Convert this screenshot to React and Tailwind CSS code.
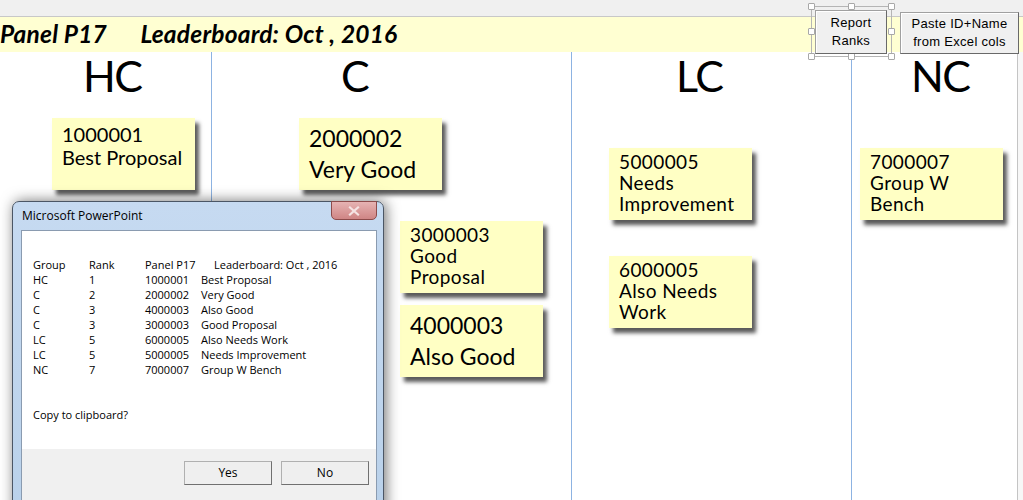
import React from 'react';

const notes = [
  { x: 52, y: 118, size: 'mid', lines: ['1000001', 'Best Proposal'] },
  { x: 299, y: 118, size: 'big', lines: ['2000002', 'Very Good'] },
  { x: 400, y: 221, size: 'small', lines: ['3000003', 'Good', 'Proposal'] },
  { x: 400, y: 305, size: 'big', lines: ['4000003', 'Also Good'] },
  { x: 609, y: 148, size: 'small', lines: ['5000005', 'Needs', 'Improvement'] },
  { x: 609, y: 256, size: 'small', lines: ['6000005', 'Also Needs', 'Work'] },
  { x: 860, y: 148, size: 'small', lines: ['7000007', 'Group W', 'Bench'] },
];

const noteText = {
  big: 'pt-[5px] text-[23px] leading-[31px]',
  mid: 'pt-[5px] text-[20px] leading-[23px]',
  small: 'pt-[3px] text-[19px] leading-[21px] tracking-[0.4px]',
};

const rows = [
  ['HC', '1', '1000001', 'Best Proposal'],
  ['C', '2', '2000002', 'Very Good'],
  ['C', '3', '4000003', 'Also Good'],
  ['C', '3', '3000003', 'Good Proposal'],
  ['LC', '5', '6000005', 'Also Needs Work'],
  ['LC', '5', '5000005', 'Needs Improvement'],
  ['NC', '7', '7000007', 'Group W Bench'],
];

const headings = [
  { label: 'HC', x: 83 },
  { label: 'C', x: 341 },
  { label: 'LC', x: 676 },
  { label: 'NC', x: 911 },
];

function StickyNote({ note }) {
  return (
    <div
      className={`absolute w-[143px] h-[72px] bg-[#ffffc4] shadow-[4px_5px_4px_rgba(0,0,0,0.65)] pl-[10px] text-black ${noteText[note.size]}`}
      style={{ left: note.x, top: note.y }}
    >
      {note.lines.map((l, i) => (
        <div key={i} className="whitespace-nowrap">{l}</div>
      ))}
    </div>
  );
}

function WinButton({ children, className }) {
  return (
    <button
      className={`bg-[#f0f0f0] border border-[#a0a0a0] border-r-[#696969] border-b-[#696969] shadow-[inset_1px_1px_0_#ffffff] text-[13px] leading-[18px] tracking-[0.3px] text-black font-['Liberation_Sans',Arial,sans-serif] ${className}`}
    >
      {children}
    </button>
  );
}

function Dialog() {
  return (
    <div className="absolute left-[12px] top-[201px] w-[372px] h-[320px] rounded-t-[7px] border border-[#4b5665] bg-gradient-to-b from-[#c6daf1] to-[#b9d1ea] shadow-[2px_0_14px_rgba(0,0,0,0.55)] font-['Open_Sans',sans-serif]">
      <div className="relative h-[28px] pl-[9px] pt-[5px] text-[12px] text-black">
        Microsoft PowerPoint
        <div className="absolute right-[6px] top-[-1px] w-[46px] h-[19px] rounded-b-[5px] border border-[#8d4b4b] bg-gradient-to-b from-[#e6b3b3] to-[#cf8585] flex items-center justify-center">
          <svg width="12" height="10" viewBox="0 0 12 10">
            <path d="M2 1.5 L10 8.5 M10 1.5 L2 8.5" stroke="#f5e4e4" strokeWidth="2.2" strokeLinecap="square" />
          </svg>
        </div>
      </div>
      <div className="ml-[8px] w-[356px] h-[300px] border border-[#8a9bb0] bg-[#f0f0f0]">
        <div className="h-[218px] bg-white pl-[11px] pt-[26px] text-[11px] leading-[15px] text-black">
          <div className="flex whitespace-nowrap">
            <span className="w-[56px]">Group</span>
            <span className="w-[56px]">Rank</span>
            <span className="w-[69px]">Panel P17</span>
            <span>Leaderboard: Oct , 2016</span>
          </div>
          {rows.map((r, i) => (
            <div key={i} className="flex whitespace-nowrap">
              <span className="w-[56px]">{r[0]}</span>
              <span className="w-[56px]">{r[1]}</span>
              <span className="w-[56px]">{r[2]}</span>
              <span>{r[3]}</span>
            </div>
          ))}
          <div className="mt-[30px]">Copy to clipboard?</div>
        </div>
        <div className="flex gap-[9px] pl-[162px] pt-[12px]">
          <button className="w-[88px] h-[24px] bg-[#efefef] border border-[#b0b0b0] border-r-[#707070] border-b-[#707070] text-[12px] text-black">Yes</button>
          <button className="w-[88px] h-[24px] bg-[#efefef] border border-[#b0b0b0] border-r-[#707070] border-b-[#707070] text-[12px] text-black">No</button>
        </div>
      </div>
    </div>
  );
}

export default function App() {
  return (
    <div className="relative w-[1023px] h-[500px] overflow-hidden bg-white font-['Lato',sans-serif]">
      <div className="h-[17px] bg-[#f0f0f0] border-b border-[#c8c8c8]"></div>
      <div className="h-[35px] bg-[#ffffd2] flex items-center">
        <span className="text-[24.5px] font-bold italic text-black whitespace-pre tracking-[0.2px]">Panel P17      Leaderboard: Oct , 2016</span>
      </div>

      {/* slide canvas */}
      <div className="relative h-[448px] flex">
        <div className="w-[212px] border-r border-[#8db3e2]"></div>
        <div className="w-[360px] border-r border-[#8db3e2]"></div>
        <div className="w-[280px] border-r border-[#8db3e2]"></div>
        <div className="w-[166px] border-r border-[#c4c4c4]"></div>
        <div className="flex-1 bg-[#f7f7f7]"></div>

        {headings.map((h) => (
          <div key={h.label} className="absolute top-[-2px] text-[43px] leading-[52px] tracking-[-1.5px] text-black" style={{ left: h.x }}>
            {h.label}
          </div>
        ))}
      </div>

      {notes.map((n, i) => (
        <StickyNote key={i} note={n} />
      ))}

      {/* selection handles around Report Ranks */}
      <div className="absolute left-[811px] top-[6px] w-[81px] h-[51px] border border-[#b5b5b5]">
        {['left-[-4px] top-[-4px]', 'left-[36px] top-[-4px]', 'right-[-4px] top-[-4px]', 'left-[-4px] top-[21px]', 'right-[-4px] top-[21px]', 'left-[-4px] bottom-[-4px]', 'left-[36px] bottom-[-4px]', 'right-[-4px] bottom-[-4px]'].map((p, i) => (
          <div key={i} className={`absolute w-[7px] h-[7px] bg-white border border-[#a8a8a8] rounded-[1px] ${p}`}></div>
        ))}
      </div>
      <WinButton className="absolute left-[815px] top-[10px] w-[72px] h-[44px]">Report<br />Ranks</WinButton>
      <WinButton className="absolute left-[900px] top-[12px] w-[119px] h-[42px]">Paste ID+Name<br />from Excel cols</WinButton>

      <Dialog />
    </div>
  );
}
